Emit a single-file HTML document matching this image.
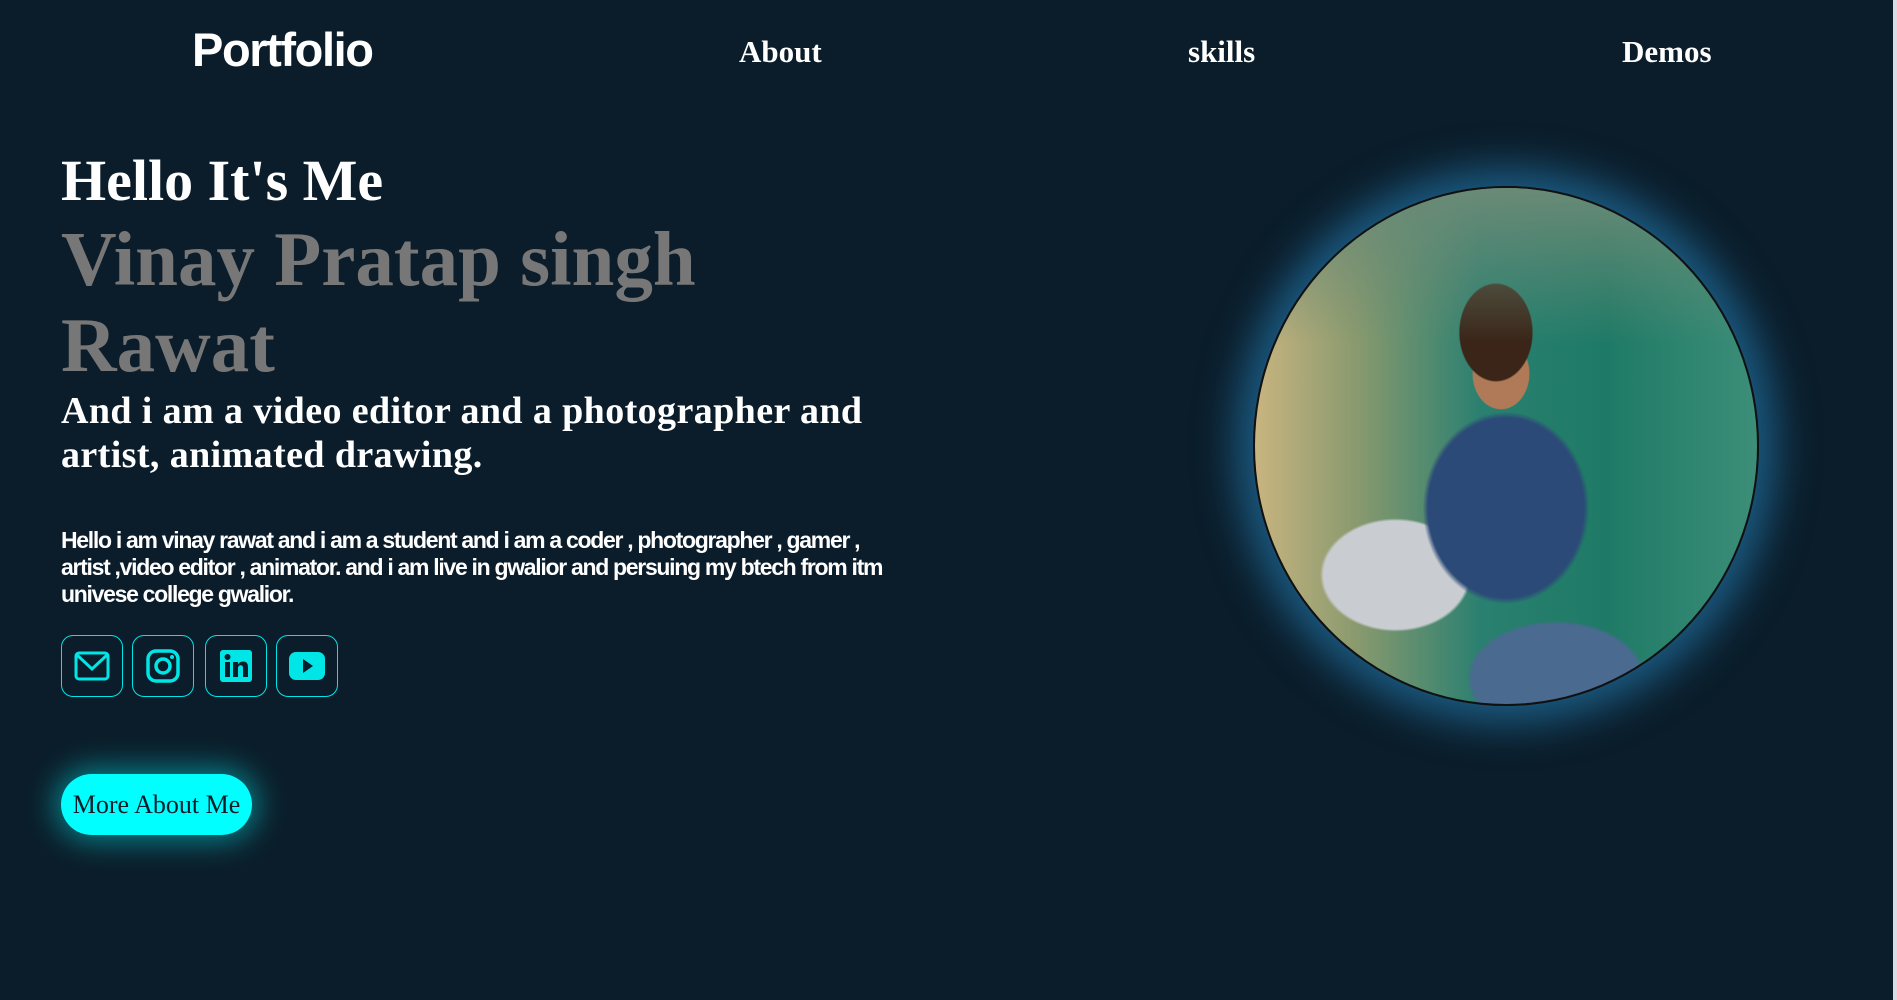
<!DOCTYPE html>
<html><head><style>
*{margin:0;padding:0;box-sizing:border-box}
body{width:1897px;height:1000px;background:#0b1d2a;overflow:hidden;position:relative;font-family:"Liberation Serif",serif;color:#fff}
.logo{position:absolute;left:192px;top:22px;font:bold 47px "Liberation Sans",sans-serif;letter-spacing:-1.4px}
.nav{position:absolute;top:34px;font:bold 31px "Liberation Serif",serif}
h1{position:absolute;left:61px;top:147px;font:bold 58px "Liberation Serif",serif;white-space:nowrap}
.name{position:absolute;left:61px;top:216px;font:bold 77px/86px "Liberation Serif",serif;color:#777;width:760px}
.role{position:absolute;left:61px;top:389px;font:bold 38px/44px "Liberation Serif",serif;letter-spacing:.4px;width:900px}
.p{position:absolute;left:61px;top:527px;width:840px;font:bold 23px/27px "Liberation Sans",sans-serif;letter-spacing:-1.3px}
.ic{position:absolute;top:635px;width:62px;height:62px;border:1px solid #00e5e5;border-radius:12px;display:flex;align-items:center;justify-content:center}
.btn{position:absolute;left:61px;top:774px;width:191px;height:61px;border-radius:31px;background:#00ffff;color:#0b1d2a;font:26px "Liberation Serif",serif;display:flex;align-items:center;justify-content:center;box-shadow:0 0 30px 6px rgba(0,255,255,.45)}
.circ{position:absolute;left:1253px;top:186px;width:506px;height:520px;border-radius:50%;border:2px solid #111;box-shadow:0 0 40px 18px rgba(40,140,200,.55);overflow:hidden;
background:
radial-gradient(ellipse 60px 80px at 48% 28%,#3a2518 60%,transparent 62%),
radial-gradient(ellipse 40px 50px at 49% 36%,#b07a58 70%,transparent 72%),
radial-gradient(ellipse 130px 150px at 50% 62%,#2c4a78 60%,transparent 64%),
radial-gradient(ellipse 120px 90px at 28% 75%,#c9ccd0 60%,transparent 63%),
radial-gradient(ellipse 140px 90px at 60% 95%,#4a6a90 60%,transparent 64%),
linear-gradient(90deg,#c8b480 0%,#8a9a6e 20%,#2a8070 45%,#1e7a66 70%,#3c8e78 100%)}
.circ:before{content:"";position:absolute;left:0;top:0;right:0;height:30%;background:linear-gradient(180deg,#6a8a76,rgba(90,130,110,0))}
</style></head><body>
<div class="logo">Portfolio</div>
<div class="nav" style="left:739px">About</div>
<div class="nav" style="left:1188px">skills</div>
<div class="nav" style="left:1622px">Demos</div>
<h1>Hello It's Me</h1>
<div class="name">Vinay Pratap singh Rawat</div>
<div class="role">And i am a video editor and a photographer and<br>artist, animated drawing.</div>
<div class="p">Hello i am vinay rawat and i am a student and i am a coder , photographer , gamer ,<br>artist ,video editor , animator. and i am live in gwalior and persuing my btech from itm<br>univese college gwalior.</div>
<div class="ic" style="left:61px"><svg width="36" height="32" viewBox="0 0 36 32"><rect x="2" y="3" width="32" height="26" rx="3" fill="none" stroke="#00e5e5" stroke-width="3"/><path d="M3 5 L18 19 L33 5" fill="none" stroke="#00e5e5" stroke-width="3"/></svg></div>
<div class="ic" style="left:132px"><svg width="36" height="36" viewBox="0 0 36 36"><rect x="3" y="3" width="30" height="30" rx="8" fill="none" stroke="#00e5e5" stroke-width="3.5"/><circle cx="18" cy="18" r="7" fill="none" stroke="#00e5e5" stroke-width="3.5"/><circle cx="27" cy="9" r="2" fill="#00e5e5"/></svg></div>
<div class="ic" style="left:205px"><svg width="36" height="36" viewBox="0 0 36 36"><rect x="2" y="2" width="32" height="32" rx="3" fill="#00e5e5"/><rect x="7" y="14" width="5" height="15" fill="#0b1d2a"/><circle cx="9.5" cy="9" r="3" fill="#0b1d2a"/><path d="M15 14h5v2.5c1-2 3-3 5.5-3 3.5 0 4.5 2.5 4.5 6V29h-5v-8.5c0-2-.5-3.2-2.3-3.2-2 0-2.7 1.5-2.7 3.5V29h-5z" fill="#0b1d2a"/></svg></div>
<div class="ic" style="left:276px"><svg width="38" height="30" viewBox="0 0 38 30"><rect x="1" y="1" width="36" height="28" rx="7" fill="#00e5e5"/><path d="M15 8 L25 15 L15 22z" fill="#0b1d2a"/></svg></div>
<div class="btn">More About Me</div>
<div class="circ"></div>
<div style="position:absolute;right:0;top:0;width:4px;height:1000px;background:#d8dde0"></div>
</body></html>
